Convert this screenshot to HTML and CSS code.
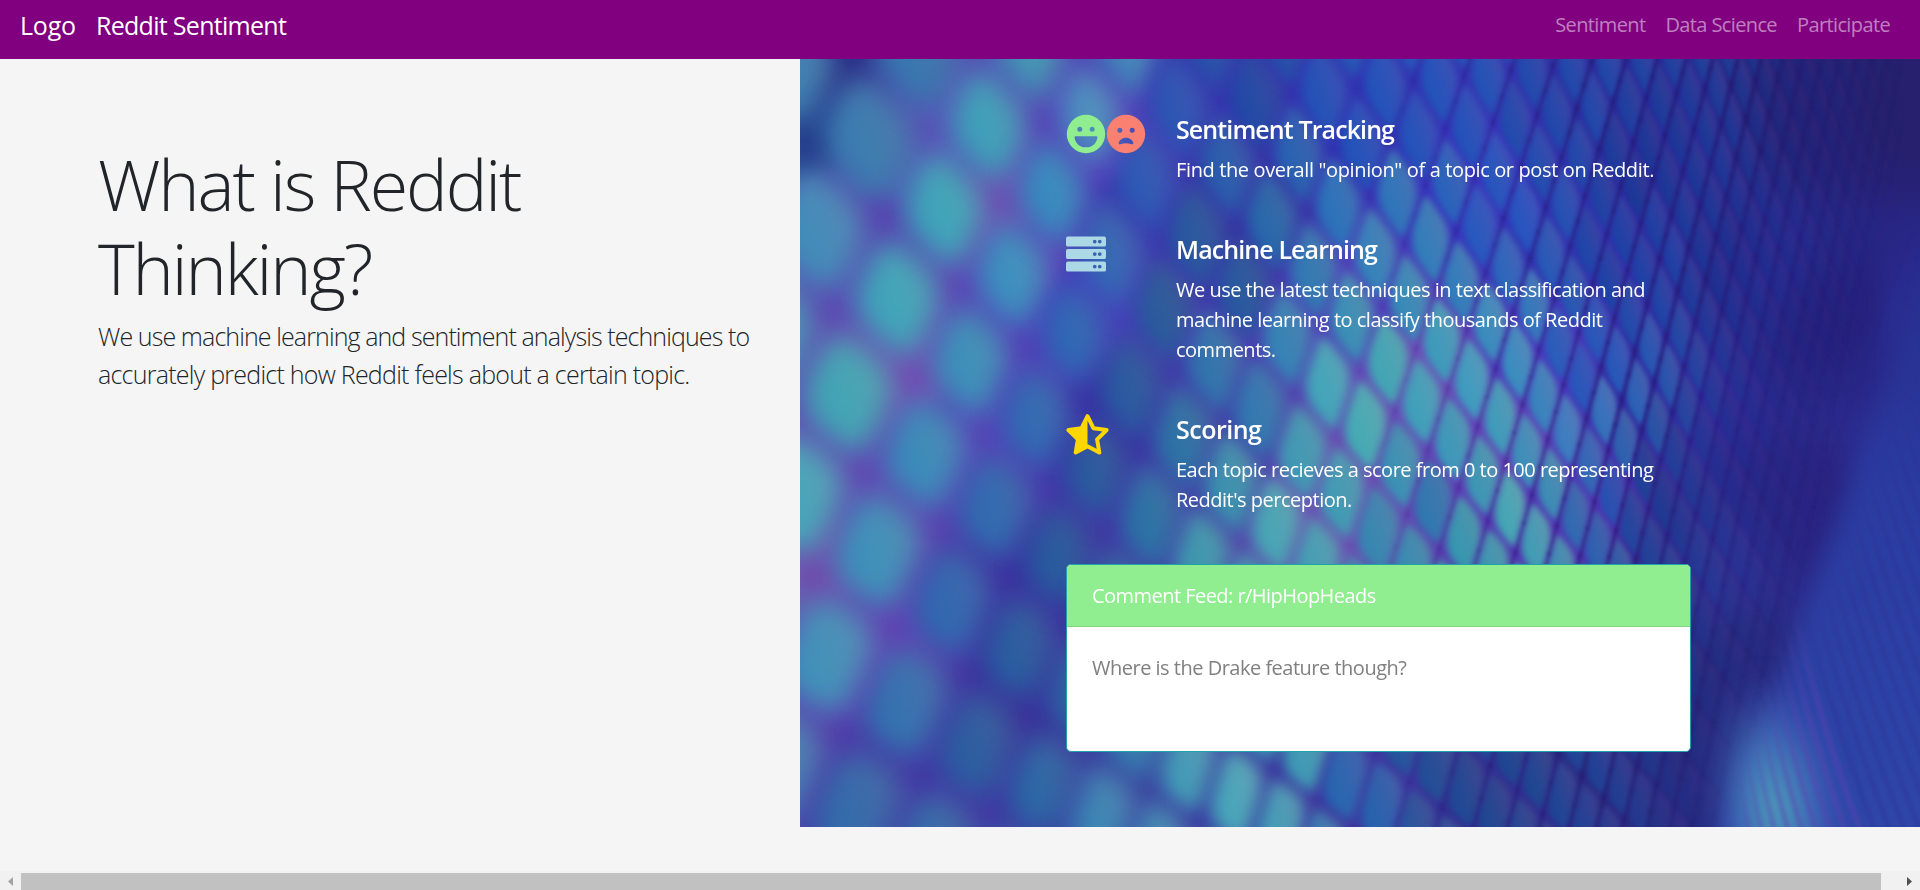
FILE: index.html
```html
<!DOCTYPE html>
<html lang="en">
<head>
<meta charset="utf-8">
<title>Reddit Sentiment</title>
<link rel="stylesheet" href="styles.css">
</head>
<body>
<div class="page">
  <nav class="navbar">
    <div class="brands"><a class="brand brand-logo">Logo</a><a class="brand">Reddit Sentiment</a></div>
    <div class="links"><a>Sentiment</a><a>Data Science</a><a>Participate</a></div>
  </nav>
  <main class="columns">
    <section class="intro">
      <h1>What is Reddit<br>Thinking?</h1>
      <p class="lead"><span class="lead-first">We use machine learning and sentiment analysis techniques to</span><br>accurately predict how Reddit feels about a certain topic.</p>
    </section>
    <section class="features">
      <canvas class="scales" id="scales" width="1120" height="768"></canvas>
      <div class="stack">
        <article class="feature">
          <div class="icons faces">
            <svg class="face" viewBox="0 0 40 40"><path fill="#90ee90" fill-rule="evenodd" d="M20 .8a19.2 19.2 0 1 0 0 38.400a19.200 19.200 0 1 0 0-38.400zM13.800 12.800a2.500 2.500 0 1 1 0 5a2.500 2.500 0 1 1 0-5zM26.200 12.800a2.500 2.500 0 1 1 0 5a2.500 2.500 0 1 1 0-5zM9.500 22.300h21q1 0 .9 1.100c-.8 6-5.300 9.900-10.900 9.900h-1c-5.600 0-10.100-3.900-10.900-9.900q-.1-1.100.9-1.100z"/></svg>
            <svg class="face" viewBox="0 0 40 40"><path fill="salmon" fill-rule="evenodd" d="M20 .8a19.200 19.200 0 1 0 0 38.400a19.200 19.200 0 1 0 0-38.400zM13.800 13.700a2.500 2.500 0 1 1 0 5a2.500 2.500 0 1 1 0-5zM26.200 13.700a2.500 2.500 0 1 1 0 5a2.500 2.500 0 1 1 0-5zM20 23.800c4 0 6.900 2.700 7.300 5.200c.2 1.200-.8 1.600-1.600 1.300c-3.500-1.300-7.900-1.300-11.400 0c-.8.300-1.800-.1-1.600-1.300c.4-2.500 3.300-5.200 7.300-5.200z"/></svg>
          </div>
          <div class="copy"><h2>Sentiment Tracking</h2><p class="wide">Find the overall "opinion" of a topic or post on Reddit.</p></div>
        </article>
        <article class="feature">
          <div class="icons">
            <svg class="server" viewBox="0 0 512 512"><path fill="lightblue" fill-rule="evenodd" d="M24 32h464q24 0 24 24v80q0 24-24 24H24q-24 0-24-24V56q0-24 24-24zM24 192h464q24 0 24 24v80q0 24-24 24H24q-24 0-24-24v-80q0-24 24-24zM24 352h464q24 0 24 24v80q0 24-24 24H24q-24 0-24-24v-80q0-24 24-24zM368 72a24 24 0 1 0 0 48a24 24 0 1 0 0-48zM432 72a24 24 0 1 0 0 48a24 24 0 1 0 0-48zM368 232a24 24 0 1 0 0 48a24 24 0 1 0 0-48zM432 232a24 24 0 1 0 0 48a24 24 0 1 0 0-48zM368 392a24 24 0 1 0 0 48a24 24 0 1 0 0-48zM432 392a24 24 0 1 0 0 48a24 24 0 1 0 0-48z"/></svg>
          </div>
          <div class="copy"><h2>Machine Learning</h2><p>We use the latest techniques in text classification and<br>machine learning to classify thousands of Reddit<br>comments.</p></div>
        </article>
        <article class="feature">
          <div class="icons">
            <svg class="star" viewBox="0 0 44 42"><path fill="none" stroke="gold" stroke-width="4" stroke-linejoin="round" d="M21.500 2.200l5.900 12l13.200 1.900l-9.500 9.300l2.200 13.100L21.500 32.300L9.700 38.500L11.900 25.400L2.400 16.100l13.200-1.900z"/><path fill="gold" d="M21.500 2.200v30.100L9.700 38.500L11.900 25.400L2.400 16.100l13.200-1.900z"/></svg>
          </div>
          <div class="copy"><h2 class="short">Scoring</h2><p>Each topic recieves a score from 0 to 100 representing<br>Reddit's perception.</p></div>
        </article>
        <div class="card">
          <div class="card-head">Comment Feed: r/HipHopHeads</div>
          <div class="card-body">Where is the Drake feature though?</div>
        </div>
      </div>
    </section>
  </main>
  <div class="scrollbar">
    <svg class="arrow" viewBox="0 0 21 17"><path fill="#a3a3a3" d="M13 4v9L8 8.500z"/></svg>
    <div class="thumb"></div>
    <svg class="arrow arrow-end" viewBox="0 0 21 17"><path fill="#505050" d="M9 4v9l5-4.500z"/></svg>
  </div>
</div>
<script src="scales.js"></script>
</body>
</html>
```
FILE: styles.css
```css
* { box-sizing: border-box; }
body { margin: 0; background: #f5f5f5; color: #212529; font: 20px/30px "Open Sans", "Noto Sans", sans-serif; letter-spacing: -.5px; white-space: nowrap; }
h1, h2, p { margin: 0; }
.page { height: 890px; display: flex; flex-direction: column; overflow: hidden; }
.navbar { height: 59px; background: purple; display: flex; justify-content: space-between; padding: 7px 30px 0 20px; }
.brands, .links { display: flex; gap: 20px; align-items: flex-start; }
.brand { color: #fff; font-size: 25px; line-height: 37.5px; letter-spacing: -.7px; }
.brand-logo { letter-spacing: -.2px; }
.links { color: rgba(255,255,255,.5); padding-top: 3px; letter-spacing: -.62px; }
.columns { height: 768px; display: grid; grid-template-columns: 800px 1120px; }
.intro { padding: 83px 0 0 98px; }
h1 { font-size: 70px; line-height: 84px; font-weight: 300; letter-spacing: -2.1px; margin-bottom: 8px; }
.lead { font-size: 25px; line-height: 37.5px; font-weight: 300; letter-spacing: -.75px; }
.lead-first { letter-spacing: -.9px; }
.features { display: grid; grid-template-columns: 1120px; grid-template-rows: 768px; color: #fff; }
.features > * { grid-area: 1 / 1; }
.scales { display: block; }
.stack { z-index: 1; width: 625px; margin: 55px 0 0 266px; display: flex; flex-direction: column; gap: 50px; height: 638px; }
.feature { display: flex; }
.icons { width: 110px; display: flex; align-items: flex-start; }
.face { width: 40px; height: 40px; }
.server { width: 40px; height: 40px; }
.star { width: 44px; height: 42px; }
h2 { font-size: 25px; line-height: 30px; font-weight: 600; letter-spacing: -.9px; margin-bottom: 11px; }
.short { letter-spacing: -.5px; }
.copy { margin-bottom: -1px; }
.wide { letter-spacing: -.37px; }
.card { height: 188px; flex: none; border: 1px solid #20a0a8; border-radius: 5px; background: #fff; overflow: hidden; }
.card-head { background: #90ee90; height: 62px; padding: 16px 25px 15px; border-bottom: 1px solid #82d482; letter-spacing: -.54px; }
.card-body { color: gray; padding: 25px; padding-top: 26px; }
.scrollbar { margin-top: auto; height: 19px; padding-top: 2px; background: #f1f1f1; display: flex; }
.arrow { width: 21px; height: 17px; }
.arrow-end { margin-left: 17px; }
.thumb { width: 1860px; background: #c1c1c1; }
```
FILE: scales.js
```javascript
// Draws a perspective field of soft iridescent scales on the feature panel.
const canvas = document.getElementById('scales');
const ctx = canvas.getContext('2d');
const W = canvas.width, H = canvas.height;

// Grid index (u, v) and the centre of that scale (x, y).
const anchors = [
  [0,0,48,333],[1,0,127,397],[2,0,197,450],[3,0,257,500],
  [0,1,97,240],[1,1,173,303],[2,1,235,362],[3,1,297,416],[4,1,352,455],
  [0,2,145,144],[1,2,213,218],[2,2,275,277],[3,2,330,328],[4,2,377,377],[6,2,476,463],
  [0,3,192,69],[1,3,252,132],[2,3,310,196],[3,3,360,245],[6,3,503,384],
  [6,4,528,321],[7,4,567,365],[8,4,604,402],[9,4,634,441],[10,4,666,475],
  [7,5,588,299],[8,5,623,343],[9,5,652,382],[10,5,682,416],[11,5,710,450],
  [6,6,577,188],[7,6,609,240],[8,6,641,289],[9,6,673,321],[10,6,701,360],[11,6,726,392],
  [10,7,717,304],[11,7,744,338],[12,7,765,372]
];

// Least-squares perspective transform through the anchors.
function fit() {
  const A = Array.from({length: 8}, () => new Float64Array(9));
  const add = (row, rhs) => {
    for (let i = 0; i < 8; i++) {
      for (let j = 0; j < 8; j++) A[i][j] += row[i] * row[j];
      A[i][8] += row[i] * rhs;
    }
  };
  for (const [u, v, x, y] of anchors) {
    add([u, v, 1, 0, 0, 0, -u * x, -v * x], x);
    add([0, 0, 0, u, v, 1, -u * y, -v * y], y);
  }
  for (let c = 0; c < 8; c++) {
    let p = c;
    for (let r = c + 1; r < 8; r++) if (Math.abs(A[r][c]) > Math.abs(A[p][c])) p = r;
    [A[c], A[p]] = [A[p], A[c]];
    for (let r = 0; r < 8; r++) {
      if (r === c) continue;
      const f = A[r][c] / A[c][c];
      for (let k = c; k < 9; k++) A[r][k] -= f * A[c][k];
    }
  }
  return A.map((r, i) => r[8] / r[i]);
}
const h = fit();
function project(u, v) {
  const d = h[6] * u + h[7] * v + 1;
  return d < 0.02 ? null : [(h[0] * u + h[1] * v + h[2]) / d, (h[3] * u + h[4] * v + h[5]) / d];
}

// Opacity of the scales: fades out toward the fold at the right.
const fade = (x, y) => Math.max(0, Math.min(1, (1120 - y * .22 - x) / 190));

// Colour samples: x, y, r, g, b.
const gaps = [
  [0,0,40,40,130],[0,80,38,60,140],[80,110,80,90,180],[20,170,95,75,180],[80,160,88,68,178],[150,80,90,82,185],[195,150,112,75,180],
  [110,320,115,75,180],[60,420,98,72,180],[20,500,115,75,175],[80,580,98,66,180],[230,200,95,65,185],[220,300,85,60,185],[160,370,88,65,185],
  [310,90,88,56,190],[280,240,72,58,190],[340,140,60,50,175],[300,360,60,45,165],[230,540,62,46,160],[140,680,68,56,165],[230,640,60,46,155],
  [420,30,55,50,175],[440,150,55,50,165],[420,400,68,65,170],[560,60,50,50,178],[560,240,80,65,185],[520,440,108,82,180],[620,310,108,78,185],
  [700,380,100,64,185],[760,440,82,50,180],[740,300,75,55,190],[660,140,58,52,190],[760,180,50,48,175],[850,80,42,42,155],[850,330,48,42,160],
  [950,200,40,38,140],[1000,60,37,33,120],[1100,40,38,32,110],[1050,250,38,33,125],[1010,450,42,36,130],[900,500,46,44,145],[950,620,40,40,125],[900,680,40,40,125],[900,750,42,42,130],
  [700,720,50,46,145],[800,680,42,42,130],[560,720,62,55,160],[400,730,58,50,160],[330,720,60,60,160],[1110,260,42,45,145],[1110,450,46,56,162],[1080,650,48,60,168],[1110,750,50,68,160],[980,740,48,52,160]
];
const tints = [
  [240,10,72,150,180],[192,69,68,160,185],[65,80,65,125,175],[145,144,68,165,185],[120,10,62,120,175],[30,170,72,140,185],[97,240,70,165,185],[48,333,72,165,180],
  [5,430,75,165,185],[213,218,65,145,190],[173,303,66,145,185],[127,397,65,140,185],[83,500,68,145,185],[38,600,72,145,185],[10,700,70,130,180],
  [252,132,60,140,190],[290,40,80,145,190],[310,196,58,105,180],[275,277,52,105,180],[235,362,55,108,178],[197,450,55,108,175],[150,550,55,105,175],[113,650,60,115,175],
  [73,735,58,108,170],[360,80,50,85,180],[360,245,48,92,155],[330,328,48,92,160],[297,416,48,92,158],[257,500,45,92,158],[220,600,48,95,160],[183,690,50,95,160],[310,740,65,135,180],
  [450,30,42,75,165],[430,200,45,85,155],[377,377,52,115,165],[352,455,50,115,165],[250,700,50,105,165],[400,470,68,155,175],[476,157,48,105,170],[542,147,52,115,185],[560,60,45,82,185],
  [450,330,58,120,175],[503,260,62,130,180],[528,321,75,165,185],[476,463,80,165,180],[588,299,75,165,180],[623,343,72,160,185],[567,365,78,170,180],[577,188,62,130,185],[632,181,60,125,185],
  [673,321,72,155,190],[717,304,68,140,190],[701,360,72,155,185],[710,450,78,165,180],[740,460,75,155,180],[634,441,58,120,175],[666,475,65,150,175],[765,372,68,125,190],[780,300,48,85,185],
  [640,60,45,82,185],[700,150,48,85,190],[760,60,42,72,170],[830,200,40,65,165],[800,440,50,80,175],[860,440,38,60,145],[860,100,38,55,150],[950,200,38,50,145],[1050,60,38,38,120],
  [960,400,38,45,140],[1030,300,36,38,125],[900,620,38,55,135],[820,720,42,68,150],[620,720,45,78,150],[500,710,72,155,180],[440,735,80,165,185],[560,730,50,100,175],[700,720,42,70,145],[890,720,38,52,135],
  [1110,300,42,65,160],[1080,500,45,70,170],[960,620,42,60,150]
];
function blend(set, x, y) {
  let r = 0, g = 0, b = 0, t = 0;
  for (const s of set) {
    const dx = x - s[0], dy = y - s[1], w = 1 / Math.pow(dx * dx + dy * dy + 120, 2);
    r += s[2] * w; g += s[3] * w; b += s[4] * w; t += w;
  }
  return [r / t, g / t, b / t];
}

// Underlying colour wash.
const small = document.createElement('canvas');
small.width = 140; small.height = 96;
const sctx = small.getContext('2d');
const img = sctx.createImageData(140, 96);
for (let j = 0; j < 96; j++) for (let i = 0; i < 140; i++) {
  const c = blend(gaps, i * 8 + 4, j * 8 + 4), k = (j * 140 + i) * 4;
  img.data[k] = c[0]; img.data[k + 1] = c[1]; img.data[k + 2] = c[2]; img.data[k + 3] = 255;
}
sctx.putImageData(img, 0, 0);
ctx.imageSmoothingEnabled = true;
ctx.drawImage(small, 0, 0, W, H);

// One soft leaf-shaped scale per grid cell, shaded teal to grey from left to right.
for (let v = -8; v < 40; v++) for (let u = -8; u < 60; u++) {
  const p = project(u, v), a = project(u + .5, v), b = project(u - .5, v), c = project(u, v + .5), d = project(u, v - .5);
  if (!p || !a || !b || !c || !d) continue;
  const [x, y] = p;
  if (x < -90 || y < -90 || x > 1100 || y > H + 90) continue;
  const alpha = fade(x, y);
  if (alpha <= 0) continue;
  const ux = a[0] - b[0], uy = a[1] - b[1], vx = c[0] - d[0], vy = c[1] - d[1];
  const [cr, cg, cb] = blend(tints, x, y);
  const area = Math.sqrt(Math.abs(ux * vy - uy * vx));
  const soft = x < 300 ? .165 : x < 600 ? .165 - (x - 300) * .0003 : .075;
  const blur = Math.max(1.2, Math.min(14, area * soft));
  const e = x < 300 ? .43 : .45;
  const P = (s, t) => [x + s * ux + t * vx, y + s * uy + t * vy];
  const half = Math.abs(ux + vx) / 2;
  const g = ctx.createLinearGradient(x - half, y + half * .35, x + half, y - half * .35);
  const tone = (k, r) => `rgba(${Math.round(cr * k + r)},${Math.round(cg * k)},${Math.round(cb * k)},${alpha})`;
  g.addColorStop(0, tone(1, -18));
  g.addColorStop(.45, tone(1, -4));
  g.addColorStop(1, tone(.97, 26));
  ctx.filter = `blur(${blur.toFixed(1)}px)`;
  ctx.fillStyle = g;
  const top = P(-e, e), right = P(e, e), bottom = P(e, -e), left = P(-e, -e);
  const m1 = P(0, e), m2 = P(e, 0), m3 = P(0, -e), m4 = P(-e, 0);
  const near = (m, q, k) => [m[0] + (q[0] - m[0]) * k, m[1] + (q[1] - m[1]) * k];
  const tip = x < 300 ? .35 : .65;
  ctx.beginPath();
  ctx.moveTo(...near(m1, top, tip));
  ctx.lineTo(...near(m1, right, .1));
  ctx.quadraticCurveTo(...right, ...near(m2, right, .1));
  ctx.lineTo(...near(m2, bottom, tip));
  ctx.quadraticCurveTo(...bottom, ...near(m3, bottom, tip));
  ctx.lineTo(...near(m3, left, .1));
  ctx.quadraticCurveTo(...left, ...near(m4, left, .1));
  ctx.lineTo(...near(m4, top, tip));
  ctx.quadraticCurveTo(...top, ...near(m1, top, tip));
  ctx.fill();
}

// Dark seams following the columns of the grid.
ctx.filter = 'blur(1.5px)';
for (let u = 5.5; u < 50; u++) {
  for (let v = -8; v < 38; v += .5) {
    const p = project(u, v), q = project(u, v + .55);
    if (!p || !q || p[0] < 480 || p[0] > 1100 || p[1] < -60 || p[1] > H + 60) continue;
    const k = Math.max(0, Math.min(1, (p[0] - 560) / 250)) * fade(p[0], p[1]);
    if (k <= 0) continue;
    ctx.strokeStyle = `rgba(34,24,105,${(.5 * k).toFixed(2)})`;
    ctx.lineWidth = 3.2;
    ctx.beginPath();
    ctx.moveTo(...p);
    ctx.lineTo(...q);
    ctx.stroke();
  }
}

// Smooth folded strip along the right edge.
ctx.filter = 'blur(12px)';
const strip = ctx.createLinearGradient(1120, 200, 1000, 768);
strip.addColorStop(0, 'rgba(40,50,145,.75)');
strip.addColorStop(.5, 'rgba(44,64,165,.9)');
strip.addColorStop(1, 'rgba(48,72,170,.9)');
ctx.fillStyle = strip;
ctx.beginPath();
ctx.moveTo(1135, 190);
ctx.quadraticCurveTo(1050, 430, 915, 790);
ctx.lineTo(1150, 790);
ctx.lineTo(1150, 190);
ctx.closePath();
ctx.fill();

// Lit patch at the foot of the fold.
const glow = ctx.createRadialGradient(0, 0, 0, 0, 0, 1);
glow.addColorStop(0, 'rgba(82,170,188,.95)');
glow.addColorStop(.5, 'rgba(72,135,190,.65)');
glow.addColorStop(1, 'rgba(60,90,190,0)');
ctx.save();
ctx.translate(975, 748);
ctx.rotate(-.12);
ctx.scale(68, 135);
ctx.fillStyle = glow;
ctx.fillRect(-1, -1, 2, 2);
ctx.restore();

// Fine ribs fanning out to the lower right.
ctx.filter = 'blur(2px)';
for (let i = 0; i < 30; i++) {
  const sx = 935 + i * 7, sy = 690 - i * 19;
  const g = ctx.createLinearGradient(sx, sy, sx + 40, sy + 110);
  const tone = i < 9 ? '92,66,175' : '42,44,145';
  g.addColorStop(0, `rgba(${tone},0)`);
  g.addColorStop(1, `rgba(${tone},${i < 9 ? .6 : .4})`);
  ctx.strokeStyle = g;
  ctx.lineWidth = 4;
  ctx.beginPath();
  ctx.moveTo(sx, sy);
  ctx.quadraticCurveTo(sx + 18 + i * 2, sy + 120 + i * 5, sx + 45 + i * 10, sy + 200 + i * 22);
  ctx.stroke();
}
ctx.filter = 'none';
```
